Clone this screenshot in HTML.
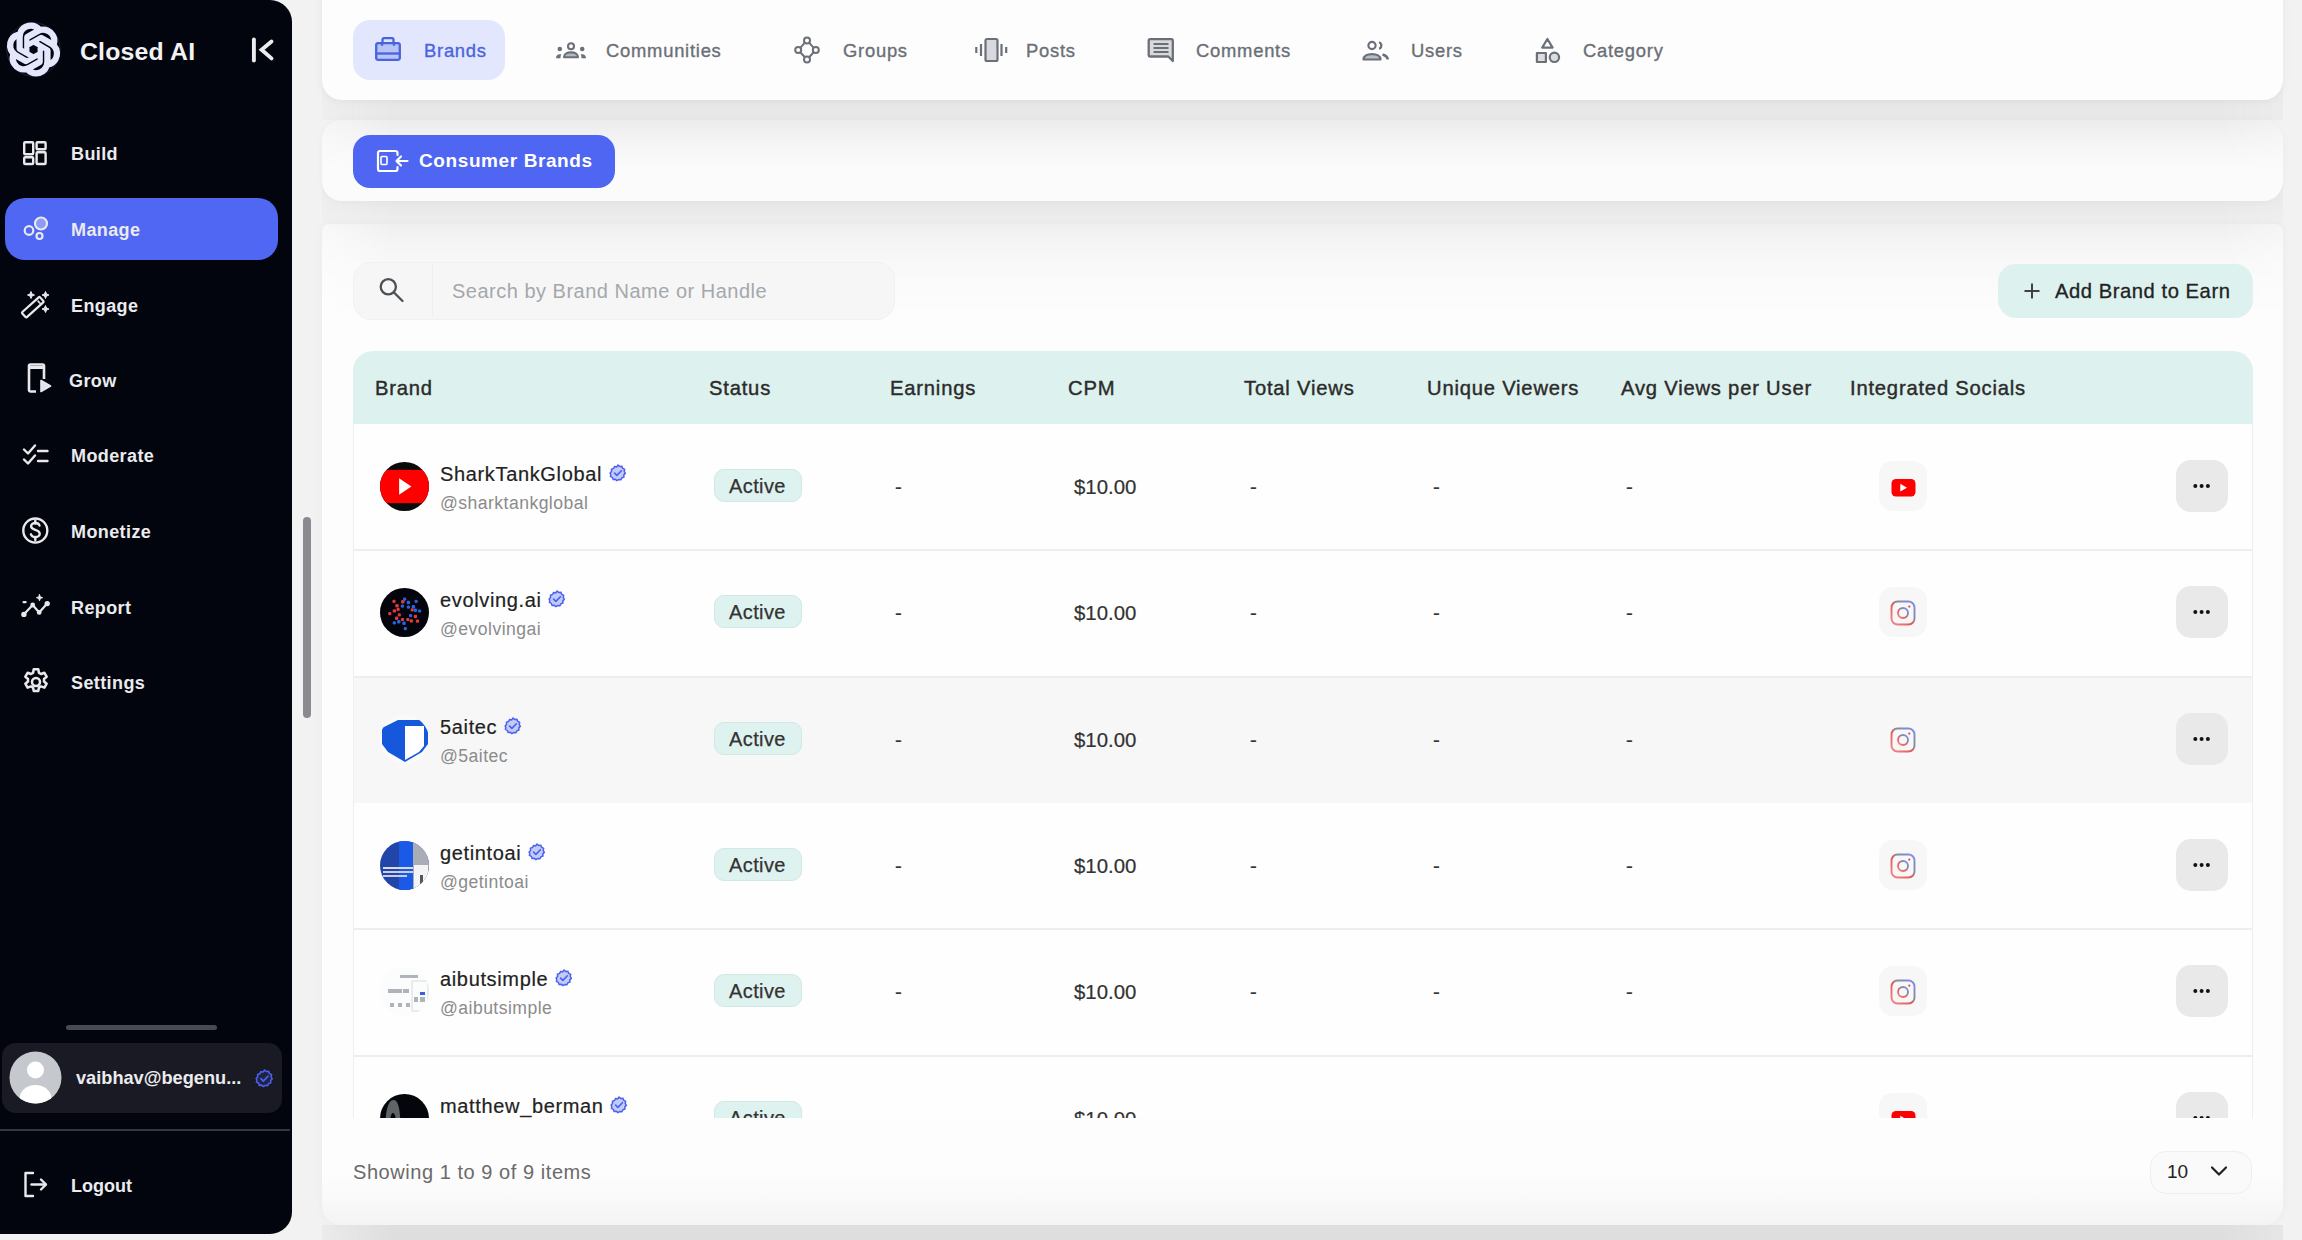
<!DOCTYPE html><html><head><meta charset="utf-8"><style>
*{margin:0;padding:0;box-sizing:border-box}
html,body{width:2302px;height:1240px;overflow:hidden;background:#f2f2f2;font-family:"Liberation Sans",sans-serif}
.a{position:absolute}
svg{position:absolute;overflow:visible}
#side{position:absolute;left:0;top:0;width:292px;height:1234px;background:#03050e;border-radius:0 22px 22px 0;overflow:hidden}
.nav{position:absolute;left:71px;color:#ebebee;font-weight:bold;font-size:18px;line-height:20px;letter-spacing:0.4px}
.card{position:absolute;left:322px;width:1961px;background:#fdfdfd;border-radius:20px;box-shadow:0 2px 10px rgba(0,0,0,0.05)}
.gap{position:absolute;left:322px;width:1961px;-webkit-mask-image:linear-gradient(to right,rgba(0,0,0,0.35) 0px,#000 70px,#000 1900px,rgba(0,0,0,0.6) 1961px);mask-image:linear-gradient(to right,rgba(0,0,0,0.35) 0px,#000 70px,#000 1900px,rgba(0,0,0,0.6) 1961px)}
.shade{position:absolute;left:0;width:1961px;-webkit-mask-image:linear-gradient(to right,rgba(0,0,0,0.35) 0px,#000 70px,#000 1900px,rgba(0,0,0,0.6) 1961px);mask-image:linear-gradient(to right,rgba(0,0,0,0.35) 0px,#000 70px,#000 1900px,rgba(0,0,0,0.6) 1961px)}
.tab{position:absolute;top:39px;font-size:18.4px;line-height:24px;color:#6b6f76;letter-spacing:0.75px;-webkit-text-stroke:0.35px currentColor}
.th{position:absolute;z-index:3;top:376px;font-size:20.2px;line-height:24px;color:#2b2b2b;letter-spacing:0.8px;-webkit-text-stroke:0.4px #2b2b2b}
.row{position:absolute;left:0;width:1900px;height:127px}
.sep{position:absolute;left:0;width:1900px;height:1.5px;background:#eeeeee}
.av{position:absolute;left:26px;top:38.5px;width:49px;height:49px;border-radius:50%;overflow:hidden}
.nm{position:absolute;left:86px;top:38.5px;font-size:20px;line-height:24px;color:#222;letter-spacing:0.65px;white-space:nowrap;-webkit-text-stroke:0.2px #222}
.hd{position:absolute;left:86px;top:68.5px;font-size:17.6px;line-height:22px;color:#8b8b8b;letter-spacing:0.45px}
.pill{position:absolute;left:360px;top:46px;width:88px;height:33px;border-radius:10px;background:#def2ef;border:1.5px solid #d0e9e4}
.pt{position:absolute;left:14px;top:5px;font-size:20px;line-height:22px;color:#333;letter-spacing:0.4px;-webkit-text-stroke:0.25px #333}
.cell{position:absolute;top:52px;font-size:20.4px;line-height:24px;color:#333;-webkit-text-stroke:0.2px #333}
.soc{position:absolute;left:1525px;top:38px;width:48px;height:50px;border-radius:14px;background:#f7f7f7}
.more{position:absolute;left:1822px;top:37px;width:52px;height:52px;border-radius:15px;background:#e9e9e9}
</style></head><body>
<div id="side">
<svg style="left:8px;top:24px" width="51" height="51" viewBox="0 0 24 24"><circle cx="12" cy="12" r="12.6" fill="none" stroke="#3a3d4a" stroke-width="0.35" opacity="0.7"/><path fill="#e4e6fb" stroke="#e4e6fb" stroke-width="1.4" stroke-linejoin="round" d="M22.2819 9.8211a5.9847 5.9847 0 0 0-.5157-4.9108 6.0462 6.0462 0 0 0-6.5098-2.9A6.0651 6.0651 0 0 0 4.9807 4.1818a5.9847 5.9847 0 0 0-3.9977 2.9 6.0462 6.0462 0 0 0 .7427 7.0966 5.98 5.98 0 0 0 .511 4.9107 6.051 6.051 0 0 0 6.5146 2.9001A5.9847 5.9847 0 0 0 13.2599 24a6.0557 6.0557 0 0 0 5.7718-4.2058 5.9894 5.9894 0 0 0 3.9977-2.9001 6.0557 6.0557 0 0 0-.7475-7.0729zm-9.022 12.6081a4.4755 4.4755 0 0 1-2.8764-1.0408l.1419-.0804 4.7783-2.7582a.7948.7948 0 0 0 .3927-.6813v-6.7369l2.02 1.1686a.071.071 0 0 1 .038.052v5.5826a4.504 4.504 0 0 1-4.4945 4.4944zm-9.6607-4.1254a4.4708 4.4708 0 0 1-.5346-3.0137l.142.0852 4.783 2.7582a.7712.7712 0 0 0 .7806 0l5.8428-3.3685v2.3324a.0804.0804 0 0 1-.0332.0615L9.74 19.9502a4.4992 4.4992 0 0 1-6.1408-1.6464zM2.3408 7.8956a4.485 4.485 0 0 1 2.3655-1.9728V11.6a.7664.7664 0 0 0 .3879.6765l5.8144 3.3543-2.0201 1.1685a.0757.0757 0 0 1-.071 0l-4.8303-2.7865A4.504 4.504 0 0 1 2.3408 7.872zm16.5963 3.8558L13.1038 8.364 15.1192 7.2a.0757.0757 0 0 1 .071 0l4.8303 2.7913a4.4944 4.4944 0 0 1-.6765 8.1042v-5.6772a.79.79 0 0 0-.407-.667zm2.0107-3.0231l-.142-.0852-4.7735-2.7818a.7759.7759 0 0 0-.7854 0L9.409 9.2297V6.8974a.0662.0662 0 0 1 .0284-.0615l4.8303-2.7866a4.4992 4.4992 0 0 1 6.6802 4.66zM8.3065 12.863l-2.02-1.1638a.0804.0804 0 0 1-.038-.0567V6.0742a4.4992 4.4992 0 0 1 7.3757-3.4537l-.142.0805L8.704 5.459a.7948.7948 0 0 0-.3927.6813zm1.0976-2.3654l2.602-1.4998 2.6069 1.4998v2.9994l-2.5974 1.4997-2.6067-1.4997Z"/></svg>
<div class="a" style="left:80px;top:38px;font-size:24.8px;line-height:28px;color:#f2f2f4;font-weight:bold;letter-spacing:0.2px">Closed AI</div>
<svg style="left:240px;top:30px" width="40" height="40" viewBox="0 0 40 40" fill="none" stroke="#ececee" stroke-width="3.9" stroke-linecap="round" stroke-linejoin="miter"><path d="M13.9 9.5v21"/><path d="M31.5 11.5L21.6 19.8l9.9 8.6"/></svg>
<div class="a" style="left:5px;top:198px;width:273px;height:62px;background:#4f67f3;border-radius:20px"></div>
<div class="nav" style="top:143.5px;left:71px">Build</div>
<div class="nav" style="top:219.5px;left:71px">Manage</div>
<div class="nav" style="top:295.5px;left:71px">Engage</div>
<div class="nav" style="top:370.5px;left:69px">Grow</div>
<div class="nav" style="top:446px;left:71px">Moderate</div>
<div class="nav" style="top:522px;left:71px">Monetize</div>
<div class="nav" style="top:597.5px;left:71px">Report</div>
<div class="nav" style="top:673px;left:71px">Settings</div>
<svg style="left:22px;top:140px" width="26" height="26" viewBox="0 0 26 26" fill="none" stroke="#e9e9ec" stroke-width="2.4">
<rect x="2.2" y="2.2" width="9" height="12" rx="1"/><rect x="14.6" y="2.2" width="9" height="7" rx="1"/><rect x="2.2" y="17.2" width="9" height="6.8" rx="1"/><rect x="14.6" y="12.2" width="9" height="11.8" rx="1"/></svg>
<svg style="left:20px;top:210px" width="32" height="32" viewBox="0 0 32 32" fill="none" stroke="#e9e9ec" stroke-width="2.2">
<circle cx="21" cy="13.5" r="6" fill="#8d9bf7"/><circle cx="9" cy="20.5" r="4.3"/><circle cx="19.5" cy="26" r="3"/></svg>
<svg style="left:20px;top:288px" width="32" height="32" viewBox="0 0 32 32" fill="none" stroke="#e9e9ec" stroke-width="2.2" stroke-linejoin="round">
<rect x="-12" y="-3.4" width="24" height="6.8" rx="1" transform="translate(12.8,19.2) rotate(-42)"/><path d="M17.6 12.6l3.4 3.6" stroke-width="1.6"/>
<path d="M11 3.5l1 2.5 2.5 1-2.5 1-1 2.5-1-2.5-2.5-1 2.5-1z" fill="#e9e9ec" stroke-width="1"/>
<path d="M25.5 3.5l1 2.5 2.5 1-2.5 1-1 2.5-1-2.5-2.5-1 2.5-1z" fill="#e9e9ec" stroke-width="1"/>
<path d="M25.5 17.5l1 2.5 2.5 1-2.5 1-1 2.5-1-2.5-2.5-1 2.5-1z" fill="#e9e9ec" stroke-width="1"/></svg>
<svg style="left:22px;top:362px" width="32" height="32" viewBox="0 0 32 32" fill="none" stroke="#e9e9ec" stroke-width="2.6" stroke-linejoin="round">
<path d="M14 29.5H8.5a1.5 1.5 0 0 1-1.5-1.5V4a1.5 1.5 0 0 1 1.5-1.5h12a1.5 1.5 0 0 1 1.5 1.5v13"/><path d="M7 5.5h15" stroke-width="3"/>
<path d="M19 18.5l9.5 5.5-9.5 5.5z" fill="#dfe1f5" stroke-width="1.6"/></svg>
<svg style="left:20px;top:440px" width="32" height="30" viewBox="0 0 32 30" fill="none" stroke="#e9e9ec" stroke-width="2.4" stroke-linecap="round" stroke-linejoin="round">
<path d="M4 9.5l4 4 7-8"/><path d="M4 19.5l4 4 7-8"/><path d="M18 11h9.5"/><path d="M18 21h9.5"/></svg>
<svg style="left:20px;top:515px" width="32" height="32" viewBox="0 0 32 32" fill="none" stroke="#e9e9ec" stroke-width="2.4">
<circle cx="15.3" cy="15.5" r="12"/><path d="M19.5 10.5c-.5-1.6-2.2-2.5-4.2-2.5-2.4 0-4.2 1.3-4.2 3.3 0 4.5 8.6 2.6 8.6 7.4 0 2-1.9 3.4-4.4 3.4-2.2 0-3.9-1-4.4-2.8" stroke-linecap="round"/><path d="M15.3 5.5v3M15.3 22v3" stroke-linecap="round"/></svg>
<svg style="left:20px;top:590px" width="32" height="32" viewBox="0 0 32 32" fill="none" stroke="#e9e9ec" stroke-width="2.2" stroke-linecap="round" stroke-linejoin="round">
<path d="M3.7 24.5l9-9.5 6.5 7.4 8-8.8"/><circle cx="3.9" cy="24.4" r="1.6" fill="#e9e9ec"/><circle cx="27.2" cy="13.6" r="1.6" fill="#e9e9ec"/><circle cx="12.7" cy="15" r="1.3" fill="#e9e9ec"/><circle cx="19.2" cy="22.4" r="1.3" fill="#e9e9ec"/><path d="M3.6 12.2h2"/>
<path d="M19.5 4.5l.9 2.3 2.3.9-2.3.9-.9 2.3-.9-2.3-2.3-.9 2.3-.9z" fill="#e9e9ec" stroke-width="0.8"/></svg>
<svg style="left:20px;top:666px" width="32" height="32" viewBox="0 0 24 24" fill="none" stroke="#e9e9ec" stroke-width="1.9" stroke-linejoin="round">
<path d="M10.3 2.5h3.4l.5 2.6 1.6.9 2.5-.9 1.7 2.9-2 1.7v1.9l2 1.7-1.7 2.9-2.5-.9-1.6.9-.5 2.6h-3.4l-.5-2.6-1.6-.9-2.5.9-1.7-2.9 2-1.7V9.7l-2-1.7 1.7-2.9 2.5.9 1.6-.9z"/><circle cx="12" cy="12" r="3"/></svg>
<div class="a" style="left:66px;top:1025px;width:151px;height:5px;background:#474a52;border-radius:3px"></div>
<div class="a" style="left:2px;top:1043px;width:280px;height:70px;background:#191a23;border-radius:14px"></div>
<svg style="left:9px;top:1051px" width="53" height="53" viewBox="0 0 53 53"><defs><clipPath id="avc"><circle cx="26.5" cy="26.5" r="26"/></clipPath></defs><circle cx="26.5" cy="26.5" r="26" fill="#c5c8cc"/><g clip-path="url(#avc)" fill="#fff"><circle cx="26.5" cy="19" r="8.5"/><ellipse cx="26.5" cy="48" rx="16" ry="14"/></g></svg>
<div class="a" style="left:76px;top:1068px;font-size:18.2px;line-height:20px;color:#ececef;font-weight:bold;white-space:nowrap">vaibhav@begenu...</div>
<svg style="left:255px;top:1069px" width="19" height="19" viewBox="0 0 24 24"><path fill="#1e2440" stroke="#4a60f0" stroke-width="2" d="M12 1.5l2.3 1.7 2.9-.2 1 2.7 2.6 1.4-.5 2.8 1.4 2.5-1.9 2.1.1 2.9-2.7 1-1.4 2.6-2.8-.4-2.4 1.6-2.2-1.8-2.9.2-1-2.7-2.6-1.4.5-2.8L1.5 12l1.9-2.1-.1-2.9 2.7-1 1.4-2.6 2.8.4z"/><path d="M7.5 12.2l3 3 6-6.2" fill="none" stroke="#4a60f0" stroke-width="2.2" stroke-linecap="round" stroke-linejoin="round"/></svg>
<div class="a" style="left:0;top:1129px;width:290px;height:2px;background:#35373f"></div>
<svg style="left:20px;top:1168px" width="32" height="32" viewBox="0 0 32 32" fill="none" stroke="#e9e9ec" stroke-width="2.4" stroke-linecap="round" stroke-linejoin="round">
<path d="M13 5H5.5v23H13"/><path d="M11.5 16.5h14"/><path d="M21 11.5l5 5-5 5"/></svg>
<div class="nav" style="top:1176px;letter-spacing:0">Logout</div>
</div>
<div class="a" style="left:303px;top:517px;width:8px;height:201px;background:#898b90;border-radius:4px"></div>
<div class="gap" style="top:80px;height:40px;background:#e8e8e8"></div>
<div class="gap" style="top:180px;height:50px;background:linear-gradient(#e6e6e6 0px,#e6e6e6 20px,#e8e8e8 26px,#ededed 40px,#efefef 50px)"></div>
<div class="card" style="top:-20px;height:120px"></div>
<div class="a" style="left:353px;top:20px;width:152px;height:60px;background:#e2e7fd;border-radius:17px"></div>
<svg style="left:374px;top:36px" width="28" height="26" viewBox="0 0 28 26" fill="none" stroke="#4a63df" stroke-width="2.3" stroke-linejoin="round"><rect x="8.5" y="2.2" width="11" height="5" rx="1.5"/><rect x="2.2" y="7.2" width="23.6" height="16.6" rx="2" fill="#b9c4f6"/><path d="M2.2 17.5h23.6"/><path d="M8 7.2v2.5M20 7.2v2.5"/></svg>
<div class="tab" style="left:424px;color:#4a63df">Brands</div>
<svg style="left:555px;top:42px" width="32" height="17" viewBox="0 0 32 17" fill="#6b7078"><circle cx="16" cy="4.2" r="3" fill="none" stroke="#6b7078" stroke-width="2.1"/><path d="M9 15.2c0-3 3-4.8 7-4.8s7 1.8 7 4.8z" fill="#b4b8c0" stroke="#6b7078" stroke-width="2.1" stroke-linejoin="round"/><circle cx="4.8" cy="7" r="2.3"/><circle cx="27.2" cy="7" r="2.3"/><path d="M1 16.3c0-2.6 1.6-4 3.8-4 .9 0 1.5.2 1.5.2-.6.9-.8 2.2-.8 3.8z"/><path d="M31 16.3c0-2.6-1.6-4-3.8-4-.9 0-1.5.2-1.5.2.6.9.8 2.2.8 3.8z"/></svg>
<div class="tab" style="left:606px">Communities</div>
<svg style="left:792px;top:36px" width="30" height="28" viewBox="0 0 30 28" fill="none" stroke="#6b7078" stroke-width="2"><circle cx="15" cy="4.5" r="3"/><circle cx="6.2" cy="14" r="3"/><circle cx="23.8" cy="14" r="3"/><circle cx="15" cy="23.4" r="3"/><path d="M12.9 6.7l-4.6 5.1M17.1 6.7l4.6 5.1M8.3 16.2l4.6 5M21.7 16.2l-4.6 5"/></svg>
<div class="tab" style="left:843px">Groups</div>
<svg style="left:974px;top:37px" width="34" height="26" viewBox="0 0 34 26" fill="none" stroke="#6b7078" stroke-width="2.2"><rect x="11.5" y="2" width="12" height="22" rx="1.5" fill="#d7d9dd"/><path d="M7 7v12M2.3 10v6M27.5 7v12M32.2 10v6"/></svg>
<div class="tab" style="left:1026px">Posts</div>
<svg style="left:1147px;top:37px" width="28" height="26" viewBox="0 0 28 26" fill="none" stroke="#6b7078" stroke-width="2.3" stroke-linejoin="round"><path d="M3 2.2h21.5a1.3 1.3 0 0 1 1.3 1.3V24l-4.5-4.5H3a1.3 1.3 0 0 1-1.3-1.3V3.5A1.3 1.3 0 0 1 3 2.2z" fill="#d7d9dd"/><path d="M6.5 7h15M6.5 11h15M6.5 15h15" stroke-width="1.8"/></svg>
<div class="tab" style="left:1196px">Comments</div>
<svg style="left:1362px;top:40px" width="28" height="22" viewBox="0 0 28 22" fill="none" stroke="#6b7078" stroke-width="2.2"><circle cx="10" cy="5.5" r="3.6"/><path d="M1.5 19.5c0-3.4 3.6-5.4 8.5-5.4s8.5 2 8.5 5.4z" fill="#b9bdc4" stroke-linejoin="round"/><path d="M17 2.2a3.5 3.5 0 0 1 0 6.6"/><path d="M20.5 14.5c2.5.8 5.2 2.2 5.2 5" stroke-width="2.6"/></svg>
<div class="tab" style="left:1411px">Users</div>
<svg style="left:1534px;top:36px" width="30" height="28" viewBox="0 0 30 28" fill="none" stroke="#6b7078" stroke-width="2.2" stroke-linejoin="round"><path d="M13.4 3l5.2 8.6H8.2z"/><rect x="2.9" y="17" width="9" height="9" fill="#dadcdf"/><circle cx="20.4" cy="21.3" r="4.7" fill="#dadcdf"/></svg>
<div class="tab" style="left:1583px">Category</div>
<div class="card" style="top:120px;height:81px;background:#fbfbfb;box-shadow:0 0 9px rgba(0,0,0,0.03);overflow:hidden"><div class="shade" style="top:0;height:50px;background:linear-gradient(rgba(0,0,0,0.058) 0px,rgba(0,0,0,0.03) 18px,rgba(0,0,0,0.008) 40px,rgba(0,0,0,0) 50px)"></div></div>
<div class="a" style="left:353px;top:135px;width:262px;height:53px;background:#4e66f2;border-radius:17px"></div>
<svg style="left:376px;top:149px" width="34" height="24" viewBox="0 0 34 24" fill="none" stroke="#fff" stroke-width="2.2" stroke-linecap="round" stroke-linejoin="round"><path d="M21.5 6V4a2 2 0 0 0-2-2H4a2 2 0 0 0-2 2v16a2 2 0 0 0 2 2h15.5a2 2 0 0 0 2-2v-2"/><rect x="5" y="7.5" width="6" height="8" rx="1" stroke-width="1.6"/><path d="M31.5 12H20.5M25 7.5L20.5 12l4.5 4.5"/></svg>
<div class="a" style="left:419px;top:150px;font-size:19px;line-height:22px;color:#fff;font-weight:bold;letter-spacing:0.6px">Consumer Brands</div>
<div class="card" style="top:224px;height:1001px;border-radius:8px 8px 20px 20px;background:linear-gradient(#fdfdfd 0px,#fdfdfd 948px,#f9f9f9 975px,#f4f4f4 1001px);box-shadow:0 0 9px rgba(0,0,0,0.04);overflow:hidden"><div class="shade" style="top:0;height:90px;background:linear-gradient(rgba(0,0,0,0.055) 0px,rgba(0,0,0,0.032) 20px,rgba(0,0,0,0.015) 45px,rgba(0,0,0,0) 90px)"></div></div>
<div class="a" style="left:353px;top:262px;width:542px;height:58px;background:#f6f6f6;border-radius:18px;border:1px solid #f1f1f1"></div>
<div class="a" style="left:432px;top:265px;width:1px;height:52px;background:#eeeeee"></div>
<svg style="left:376px;top:275px" width="30" height="30" viewBox="0 0 30 30" fill="none" stroke="#4b5056" stroke-width="2.3" stroke-linecap="round"><circle cx="12.3" cy="11.7" r="7.6"/><path d="M18 17.5l8.5 8.5"/></svg>
<div class="a" style="left:452px;top:279px;font-size:20px;line-height:24px;color:#a4a8ac;letter-spacing:0.5px">Search by Brand Name or Handle</div>
<div class="a" style="left:1998px;top:264px;width:255px;height:54px;background:#ddf1ee;border-radius:18px"></div>
<svg style="left:2022px;top:281px" width="20" height="20" viewBox="0 0 20 20" fill="none" stroke="#3e4246" stroke-width="2"><path d="M10 2.5v15M2.5 10h15"/></svg>
<div class="a" style="left:2055px;top:279px;font-size:20.2px;line-height:24px;color:#222;letter-spacing:0.55px;-webkit-text-stroke:0.3px #222">Add Brand to Earn</div>
<div class="gap" style="top:1225px;height:15px;background:#dedede"></div>
<div class="a" style="left:353px;top:351px;width:1900px;height:73px;background:#ddf1ee;border-radius:20px 20px 0 0;z-index:2"></div>
<div class="th" style="left:375px">Brand</div>
<div class="th" style="left:709px">Status</div>
<div class="th" style="left:890px">Earnings</div>
<div class="th" style="left:1068px">CPM</div>
<div class="th" style="left:1244px">Total Views</div>
<div class="th" style="left:1427px">Unique Viewers</div>
<div class="th" style="left:1621px">Avg Views per User</div>
<div class="th" style="left:1850px">Integrated Socials</div>
<div class="a" style="left:353px;top:423px;width:1900px;height:695px;overflow:hidden;background:#fefefe;border-left:1.5px solid #eeeeee;border-right:1.5px solid #eeeeee">
<div class="row" style="top:0px;">
<div class="av"><svg style="left:0;top:0" width="49" height="49" viewBox="0 0 50 50"><rect width="50" height="50" fill="#0b0b0b"/><rect y="8" width="50" height="34" fill="#fe0000"/><path d="M19.5 16.5l12.5 8.5-12.5 8.5z" fill="#fff"/></svg></div>
<div class="nm">SharkTankGlobal</div>
<svg style="left:255px;top:40.5px" width="18" height="18" viewBox="0 0 24 24"><path fill="#c3cbf7" stroke="#4a60f0" stroke-width="2" d="M12 1.5l2.3 1.7 2.9-.2 1 2.7 2.6 1.4-.5 2.8 1.4 2.5-1.9 2.1.1 2.9-2.7 1-1.4 2.6-2.8-.4-2.4 1.6-2.2-1.8-2.9.2-1-2.7-2.6-1.4.5-2.8L1.5 12l1.9-2.1-.1-2.9 2.7-1 1.4-2.6 2.8.4z"/><path d="M7.5 12.2l3 3 6-6.2" fill="none" stroke="#4a60f0" stroke-width="2.2" stroke-linecap="round" stroke-linejoin="round"/></svg>
<div class="hd">@sharktankglobal</div>
<div class="pill"><div class="pt">Active</div></div>
<div class="cell" style="left:541px">-</div>
<div class="cell" style="left:720px">$10.00</div>
<div class="cell" style="left:896px">-</div>
<div class="cell" style="left:1079px">-</div>
<div class="cell" style="left:1272px">-</div>
<div class="soc"><svg style="left:12px;top:17px" width="25" height="19" viewBox="0 0 25 19"><rect x="0.5" y="1" width="24" height="17.5" rx="4.5" fill="#fe0000"/><path d="M9.3 5.8l6.7 3.9-6.7 3.9z" fill="#fff"/></svg></div>
<div class="more"><svg style="left:16px;top:23px" width="22" height="6" viewBox="0 0 22 6"><circle cx="3.3" cy="3" r="2" fill="#111"/><circle cx="9.6" cy="3" r="2" fill="#111"/><circle cx="15.9" cy="3" r="2" fill="#111"/></svg></div>
</div>
<div class="row" style="top:126px;">
<div class="av"><svg style="left:0;top:0" width="50" height="50" viewBox="0 0 50 50"><rect width="50" height="50" fill="#03040c"/><rect x="29.0" y="26.1" width="3.2" height="3.2" rx="1.2" fill="#2a62e0"/><rect x="26.2" y="29.9" width="3.2" height="3.2" rx="1.2" fill="#e03a3a"/><rect x="20.9" y="29.9" width="3.2" height="3.2" rx="1.2" fill="#e03a3a"/><rect x="17.7" y="25.2" width="3.2" height="3.2" rx="1.2" fill="#e03a3a"/><rect x="16.5" y="19.8" width="3.2" height="3.2" rx="1.2" fill="#e03a3a"/><rect x="20.8" y="16.6" width="3.2" height="3.2" rx="1.2" fill="#2a62e0"/><rect x="26.8" y="17.6" width="3.2" height="3.2" rx="1.2" fill="#2a62e0"/><rect x="30.6" y="20.2" width="3.2" height="3.2" rx="1.2" fill="#e03a3a"/><rect x="29.6" y="31.2" width="3.4" height="3.4" rx="1.2" fill="#e03a3a"/><rect x="22.3" y="33.5" width="3.4" height="3.4" rx="1.2" fill="#2a62e0"/><rect x="17.1" y="32.0" width="3.4" height="3.4" rx="1.2" fill="#2a62e0"/><rect x="14.9" y="28.6" width="3.4" height="3.4" rx="1.2" fill="#e03a3a"/><rect x="12.7" y="21.2" width="3.4" height="3.4" rx="1.2" fill="#e03a3a"/><rect x="15.3" y="16.0" width="3.4" height="3.4" rx="1.2" fill="#e03a3a"/><rect x="21.1" y="12.0" width="3.4" height="3.4" rx="1.2" fill="#e03a3a"/><rect x="26.7" y="12.8" width="3.4" height="3.4" rx="1.2" fill="#2a62e0"/><rect x="31.7" y="17.0" width="3.4" height="3.4" rx="1.2" fill="#2a62e0"/><rect x="33.7" y="20.6" width="3.4" height="3.4" rx="1.2" fill="#2a62e0"/><rect x="33.7" y="26.8" width="3.4" height="3.4" rx="1.2" fill="#e03a3a"/><rect x="23.7" y="39.0" width="3.2" height="3.2" rx="1.2" fill="#2a62e0"/><rect x="12.7" y="33.3" width="3.2" height="3.2" rx="1.2" fill="#2a62e0"/><rect x="8.2" y="24.0" width="3.2" height="3.2" rx="1.2" fill="#e03a3a"/><rect x="12.4" y="11.7" width="3.2" height="3.2" rx="1.2" fill="#e03a3a"/><rect x="23.1" y="9.5" width="3.2" height="3.2" rx="1.2" fill="#2a62e0"/><rect x="34.5" y="11.7" width="3.2" height="3.2" rx="1.2" fill="#2a62e0"/><rect x="38.0" y="21.4" width="3.2" height="3.2" rx="1.2" fill="#2a62e0"/><rect x="35.9" y="31.5" width="3.2" height="3.2" rx="1.2" fill="#e03a3a"/></svg></div>
<div class="nm">evolving.ai</div>
<svg style="left:194px;top:40.5px" width="18" height="18" viewBox="0 0 24 24"><path fill="#c3cbf7" stroke="#4a60f0" stroke-width="2" d="M12 1.5l2.3 1.7 2.9-.2 1 2.7 2.6 1.4-.5 2.8 1.4 2.5-1.9 2.1.1 2.9-2.7 1-1.4 2.6-2.8-.4-2.4 1.6-2.2-1.8-2.9.2-1-2.7-2.6-1.4.5-2.8L1.5 12l1.9-2.1-.1-2.9 2.7-1 1.4-2.6 2.8.4z"/><path d="M7.5 12.2l3 3 6-6.2" fill="none" stroke="#4a60f0" stroke-width="2.2" stroke-linecap="round" stroke-linejoin="round"/></svg>
<div class="hd">@evolvingai</div>
<div class="pill"><div class="pt">Active</div></div>
<div class="cell" style="left:541px">-</div>
<div class="cell" style="left:720px">$10.00</div>
<div class="cell" style="left:896px">-</div>
<div class="cell" style="left:1079px">-</div>
<div class="cell" style="left:1272px">-</div>
<div class="soc"><svg style="left:11px;top:13px" width="26" height="26" viewBox="0 0 26 26" fill="none" stroke-width="1.9"><defs><linearGradient id="igg" x1="0" y1="1" x2="1" y2="0"><stop offset="0" stop-color="#f28b8b"/><stop offset="0.45" stop-color="#e05a5a"/><stop offset="0.6" stop-color="#888c96"/><stop offset="1" stop-color="#7d8ef5"/></linearGradient></defs><rect x="1.5" y="1.5" width="23" height="23" rx="6" stroke="url(#igg)"/><circle cx="13" cy="13" r="5" stroke="url(#igg)"/><circle cx="19.3" cy="6.6" r="1.1" fill="#d84848" stroke="none"/></svg></div>
<div class="more"><svg style="left:16px;top:23px" width="22" height="6" viewBox="0 0 22 6"><circle cx="3.3" cy="3" r="2" fill="#111"/><circle cx="9.6" cy="3" r="2" fill="#111"/><circle cx="15.9" cy="3" r="2" fill="#111"/></svg></div>
</div>
<div class="sep" style="top:126px"></div>
<div class="row" style="top:253px;background:#f7f7f7;">
<div class="av"><svg style="left:0;top:0" width="50" height="50" viewBox="0 0 50 50"><rect width="50" height="50" fill="#fafafa"/><path d="M18 5h23l7 8v16l-6 8-17 10-17-10-6-8V13z" fill="#1658dc" transform="translate(0,0)"/><path d="M25 11h19v20l-5 6-14 8z" fill="#fff"/></svg></div>
<div class="nm">5aitec</div>
<svg style="left:150px;top:40.5px" width="18" height="18" viewBox="0 0 24 24"><path fill="#c3cbf7" stroke="#4a60f0" stroke-width="2" d="M12 1.5l2.3 1.7 2.9-.2 1 2.7 2.6 1.4-.5 2.8 1.4 2.5-1.9 2.1.1 2.9-2.7 1-1.4 2.6-2.8-.4-2.4 1.6-2.2-1.8-2.9.2-1-2.7-2.6-1.4.5-2.8L1.5 12l1.9-2.1-.1-2.9 2.7-1 1.4-2.6 2.8.4z"/><path d="M7.5 12.2l3 3 6-6.2" fill="none" stroke="#4a60f0" stroke-width="2.2" stroke-linecap="round" stroke-linejoin="round"/></svg>
<div class="hd">@5aitec</div>
<div class="pill"><div class="pt">Active</div></div>
<div class="cell" style="left:541px">-</div>
<div class="cell" style="left:720px">$10.00</div>
<div class="cell" style="left:896px">-</div>
<div class="cell" style="left:1079px">-</div>
<div class="cell" style="left:1272px">-</div>
<div class="soc"><svg style="left:11px;top:13px" width="26" height="26" viewBox="0 0 26 26" fill="none" stroke-width="1.9"><defs><linearGradient id="igg" x1="0" y1="1" x2="1" y2="0"><stop offset="0" stop-color="#f28b8b"/><stop offset="0.45" stop-color="#e05a5a"/><stop offset="0.6" stop-color="#888c96"/><stop offset="1" stop-color="#7d8ef5"/></linearGradient></defs><rect x="1.5" y="1.5" width="23" height="23" rx="6" stroke="url(#igg)"/><circle cx="13" cy="13" r="5" stroke="url(#igg)"/><circle cx="19.3" cy="6.6" r="1.1" fill="#d84848" stroke="none"/></svg></div>
<div class="more"><svg style="left:16px;top:23px" width="22" height="6" viewBox="0 0 22 6"><circle cx="3.3" cy="3" r="2" fill="#111"/><circle cx="9.6" cy="3" r="2" fill="#111"/><circle cx="15.9" cy="3" r="2" fill="#111"/></svg></div>
</div>
<div class="sep" style="top:253px"></div>
<div class="row" style="top:379px;">
<div class="av"><svg style="left:0;top:0" width="50" height="50" viewBox="0 0 50 50"><rect width="50" height="50" fill="#2145a8"/><rect x="19" width="16" height="50" fill="#1a5ae6"/><rect x="33" width="17" height="50" fill="#a8adb6"/><rect x="34" y="24" width="14" height="26" fill="#f4f4f4"/><rect x="40" y="34" width="3" height="9" fill="#555"/><rect x="3" y="26" width="30" height="2" fill="#d9dce8"/><rect x="3" y="30" width="30" height="2" fill="#c9cde8"/><rect x="3" y="34" width="24" height="2" fill="#c9cde8"/></svg></div>
<div class="nm">getintoai</div>
<svg style="left:174px;top:40.5px" width="18" height="18" viewBox="0 0 24 24"><path fill="#c3cbf7" stroke="#4a60f0" stroke-width="2" d="M12 1.5l2.3 1.7 2.9-.2 1 2.7 2.6 1.4-.5 2.8 1.4 2.5-1.9 2.1.1 2.9-2.7 1-1.4 2.6-2.8-.4-2.4 1.6-2.2-1.8-2.9.2-1-2.7-2.6-1.4.5-2.8L1.5 12l1.9-2.1-.1-2.9 2.7-1 1.4-2.6 2.8.4z"/><path d="M7.5 12.2l3 3 6-6.2" fill="none" stroke="#4a60f0" stroke-width="2.2" stroke-linecap="round" stroke-linejoin="round"/></svg>
<div class="hd">@getintoai</div>
<div class="pill"><div class="pt">Active</div></div>
<div class="cell" style="left:541px">-</div>
<div class="cell" style="left:720px">$10.00</div>
<div class="cell" style="left:896px">-</div>
<div class="cell" style="left:1079px">-</div>
<div class="cell" style="left:1272px">-</div>
<div class="soc"><svg style="left:11px;top:13px" width="26" height="26" viewBox="0 0 26 26" fill="none" stroke-width="1.9"><defs><linearGradient id="igg" x1="0" y1="1" x2="1" y2="0"><stop offset="0" stop-color="#f28b8b"/><stop offset="0.45" stop-color="#e05a5a"/><stop offset="0.6" stop-color="#888c96"/><stop offset="1" stop-color="#7d8ef5"/></linearGradient></defs><rect x="1.5" y="1.5" width="23" height="23" rx="6" stroke="url(#igg)"/><circle cx="13" cy="13" r="5" stroke="url(#igg)"/><circle cx="19.3" cy="6.6" r="1.1" fill="#d84848" stroke="none"/></svg></div>
<div class="more"><svg style="left:16px;top:23px" width="22" height="6" viewBox="0 0 22 6"><circle cx="3.3" cy="3" r="2" fill="#111"/><circle cx="9.6" cy="3" r="2" fill="#111"/><circle cx="15.9" cy="3" r="2" fill="#111"/></svg></div>
</div>
<div class="row" style="top:505px;">
<div class="av"><svg style="left:0;top:0" width="50" height="50" viewBox="0 0 50 50"><rect width="50" height="50" fill="#fbfcfc"/><g fill="#aeb4ba"><rect x="20" y="8" width="18" height="3"/><rect x="8" y="22" width="14" height="4"/><rect x="23" y="22" width="6" height="4"/><rect x="10" y="36" width="4" height="4"/><rect x="18" y="36" width="4" height="4"/><rect x="26" y="36" width="4" height="4"/><rect x="40" y="30" width="5" height="5"/><rect x="40" y="25" width="5" height="3" fill="#3a5fe0"/><rect x="34" y="30" width="4" height="5"/></g><rect x="32" y="14" width="16" height="30" fill="none" stroke="#d8dadd"/></svg></div>
<div class="nm">aibutsimple</div>
<svg style="left:201px;top:40.5px" width="18" height="18" viewBox="0 0 24 24"><path fill="#c3cbf7" stroke="#4a60f0" stroke-width="2" d="M12 1.5l2.3 1.7 2.9-.2 1 2.7 2.6 1.4-.5 2.8 1.4 2.5-1.9 2.1.1 2.9-2.7 1-1.4 2.6-2.8-.4-2.4 1.6-2.2-1.8-2.9.2-1-2.7-2.6-1.4.5-2.8L1.5 12l1.9-2.1-.1-2.9 2.7-1 1.4-2.6 2.8.4z"/><path d="M7.5 12.2l3 3 6-6.2" fill="none" stroke="#4a60f0" stroke-width="2.2" stroke-linecap="round" stroke-linejoin="round"/></svg>
<div class="hd">@aibutsimple</div>
<div class="pill"><div class="pt">Active</div></div>
<div class="cell" style="left:541px">-</div>
<div class="cell" style="left:720px">$10.00</div>
<div class="cell" style="left:896px">-</div>
<div class="cell" style="left:1079px">-</div>
<div class="cell" style="left:1272px">-</div>
<div class="soc"><svg style="left:11px;top:13px" width="26" height="26" viewBox="0 0 26 26" fill="none" stroke-width="1.9"><defs><linearGradient id="igg" x1="0" y1="1" x2="1" y2="0"><stop offset="0" stop-color="#f28b8b"/><stop offset="0.45" stop-color="#e05a5a"/><stop offset="0.6" stop-color="#888c96"/><stop offset="1" stop-color="#7d8ef5"/></linearGradient></defs><rect x="1.5" y="1.5" width="23" height="23" rx="6" stroke="url(#igg)"/><circle cx="13" cy="13" r="5" stroke="url(#igg)"/><circle cx="19.3" cy="6.6" r="1.1" fill="#d84848" stroke="none"/></svg></div>
<div class="more"><svg style="left:16px;top:23px" width="22" height="6" viewBox="0 0 22 6"><circle cx="3.3" cy="3" r="2" fill="#111"/><circle cx="9.6" cy="3" r="2" fill="#111"/><circle cx="15.9" cy="3" r="2" fill="#111"/></svg></div>
</div>
<div class="sep" style="top:505px"></div>
<div class="row" style="top:632px;">
<div class="av"><svg style="left:0;top:0" width="49" height="49" viewBox="0 0 49 49"><rect width="49" height="49" fill="#05060c"/><path d="M5.5 30C5.5 16 8.5 6 13.5 6S20 16 20.5 30z" fill="#5f6566"/><path d="M10 30c0-6 1-11 3-11s3 5 3 11z" fill="#05060c"/></svg></div>
<div class="nm">matthew_berman</div>
<svg style="left:256px;top:40.5px" width="18" height="18" viewBox="0 0 24 24"><path fill="#c3cbf7" stroke="#4a60f0" stroke-width="2" d="M12 1.5l2.3 1.7 2.9-.2 1 2.7 2.6 1.4-.5 2.8 1.4 2.5-1.9 2.1.1 2.9-2.7 1-1.4 2.6-2.8-.4-2.4 1.6-2.2-1.8-2.9.2-1-2.7-2.6-1.4.5-2.8L1.5 12l1.9-2.1-.1-2.9 2.7-1 1.4-2.6 2.8.4z"/><path d="M7.5 12.2l3 3 6-6.2" fill="none" stroke="#4a60f0" stroke-width="2.2" stroke-linecap="round" stroke-linejoin="round"/></svg>
<div class="hd">@matthew_berman</div>
<div class="pill"><div class="pt">Active</div></div>
<div class="cell" style="left:541px">-</div>
<div class="cell" style="left:720px">$10.00</div>
<div class="cell" style="left:896px">-</div>
<div class="cell" style="left:1079px">-</div>
<div class="cell" style="left:1272px">-</div>
<div class="soc"><svg style="left:12px;top:17px" width="25" height="19" viewBox="0 0 25 19"><rect x="0.5" y="1" width="24" height="17.5" rx="4.5" fill="#fe0000"/><path d="M9.3 5.8l6.7 3.9-6.7 3.9z" fill="#fff"/></svg></div>
<div class="more"><svg style="left:16px;top:23px" width="22" height="6" viewBox="0 0 22 6"><circle cx="3.3" cy="3" r="2" fill="#111"/><circle cx="9.6" cy="3" r="2" fill="#111"/><circle cx="15.9" cy="3" r="2" fill="#111"/></svg></div>
</div>
<div class="sep" style="top:632px"></div>
</div>
<div class="a" style="left:353px;top:1160px;font-size:20px;line-height:24px;color:#6a6a6a;letter-spacing:0.55px">Showing 1 to 9 of 9 items</div>
<div class="a" style="left:2150px;top:1151px;width:102px;height:43px;background:#fafafa;border:1.5px solid #efefef;border-radius:16px"></div>
<div class="a" style="left:2167px;top:1161px;font-size:19px;line-height:22px;color:#222">10</div>
<svg style="left:2209px;top:1164px" width="20" height="14" viewBox="0 0 20 14" fill="none" stroke="#222" stroke-width="2.2" stroke-linecap="round" stroke-linejoin="round"><path d="M3 3.5l7 7 7-7"/></svg>
</body></html>
